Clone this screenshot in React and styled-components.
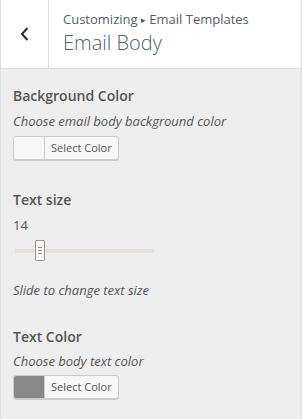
import styled, { createGlobalStyle } from 'styled-components'

const GlobalStyle = createGlobalStyle`
    html, body {
        margin: 0;
        padding: 0;
        background: #eee;
        font-family: "Open Sans", "Liberation Sans", sans-serif;
        color: #555d66;
    }
`

//Styles
const Panel = styled.div`
    width: 302px;
    height: 419px;
    box-sizing: border-box;
    background: #eee;
    border-left: 1px solid #dedede;
    border-right: 1px solid #ddd;
    position: relative;
    overflow: hidden;
`

const ScrollMark = styled.div`
    position: absolute;
    right: -1px;
    top: 23px;
    width: 1px;
    height: 159px;
    background: #2fb3c0;
`

const Header = styled.header`
    display: flex;
    height: 68px;
    background: #fff;
    border-bottom: 1px solid #ddd;
`

const BackButton = styled.button`
    width: 48px;
    flex-shrink: 0;
    padding: 0;
    border: none;
    border-right: 1px solid #ddd;
    background: #fff;
    display: flex;
    align-items: center;
    justify-content: center;
    color: #23282d;
`

const Titles = styled.div`
    padding: 9px 0 0 14px;
    display: flex;
    flex-direction: column;
`

const Crumbs = styled.span`
    font-size: 13px;
    line-height: 20px;
    color: #555d66;

    & > small {
        font-size: 9px;
        vertical-align: 1px;
    }
`

const Title = styled.h1`
    margin: 0;
    font-size: 20px;
    font-weight: 300;
    line-height: 26px;
    color: #555d66;
`

const Section = styled.section`
    padding: 0 12px;
    margin-top: ${p => p.$top}px;
`

const Label = styled.h3`
    margin: 0;
    font-size: 14px;
    font-weight: 600;
    line-height: 21px;
    color: #555;
`

const Desc = styled.p`
    margin: ${p => p.$gap || 0}px 0 0;
    font-size: 13px;
    font-style: italic;
    line-height: 20px;
    color: #555;
`

const ColorButton = styled.button`
    margin-top: ${p => p.$gap || 5}px;
    display: flex;
    align-items: stretch;
    height: 24px;
    padding: 0;
    border: 1px solid #ccc;
    border-radius: 3px;
    background: #f7f7f7;
    box-shadow: 0 1px 0 #ccc;
    overflow: hidden;
    font-family: inherit;

    & > span {
        padding: 0 6px;
        font-size: 11px;
        line-height: 22px;
        color: #555;
    }
`

const Swatch = styled.i`
    width: 30px;
    border-right: 1px solid #ccc;
    background: ${p => p.$color};
`

const Value = styled.div`
    margin-top: 6px;
    font-size: 13px;
    line-height: 18px;
    color: #555;
`

const SliderTrack = styled.div`
    position: relative;
    margin: 15px 0 0 2px;
    width: 139px;
    height: 4px;
    background: #e4e1dc;
`

const Handle = styled.div`
    position: absolute;
    left: 20px;
    top: -9px;
    width: 8px;
    height: 19px;
    border: 1px solid #9d978f;
    border-radius: 1px;
    background: #f7f7f7;
    display: flex;
    flex-direction: column;
    justify-content: center;
    align-items: center;
    gap: 2px;

    & > b {
        width: 4px;
        height: 1px;
        background: #9d978f;
    }
`

const Chevron = () => (
    <svg width="10" height="16" viewBox="0 0 10 16">
        <path d="M7.5 2 L2 8 L7.5 14" fill="none" stroke="#23282d" strokeWidth="2" />
    </svg>
)

//Component
const App = () => {
    return (
        <Panel>
            <GlobalStyle />
            <ScrollMark />
            <Header>
                <BackButton aria-label="Back">
                    <Chevron />
                </BackButton>
                <Titles>
                    <Crumbs>Customizing <small>▸</small> Email Templates</Crumbs>
                    <Title>Email Body</Title>
                </Titles>
            </Header>

            <Section $top={16}>
                <Label>Background Color</Label>
                <Desc $gap={5}>Choose email body background color</Desc>
                <ColorButton>
                    <Swatch $color="#f7f7f7" />
                    <span>Select Color</span>
                </ColorButton>
            </Section>

            <Section $top={29}>
                <Label>Text size</Label>
                <Value>14</Value>
                <SliderTrack>
                    <Handle><b /><b /><b /></Handle>
                </SliderTrack>
                <Desc $gap={27}>Slide to change text size</Desc>
            </Section>

            <Section $top={26}>
                <Label>Text Color</Label>
                <Desc $gap={4}>Choose body text color</Desc>
                <ColorButton $gap={4}>
                    <Swatch $color="#888" />
                    <span>Select Color</span>
                </ColorButton>
            </Section>
        </Panel>
    )
}

export default App
